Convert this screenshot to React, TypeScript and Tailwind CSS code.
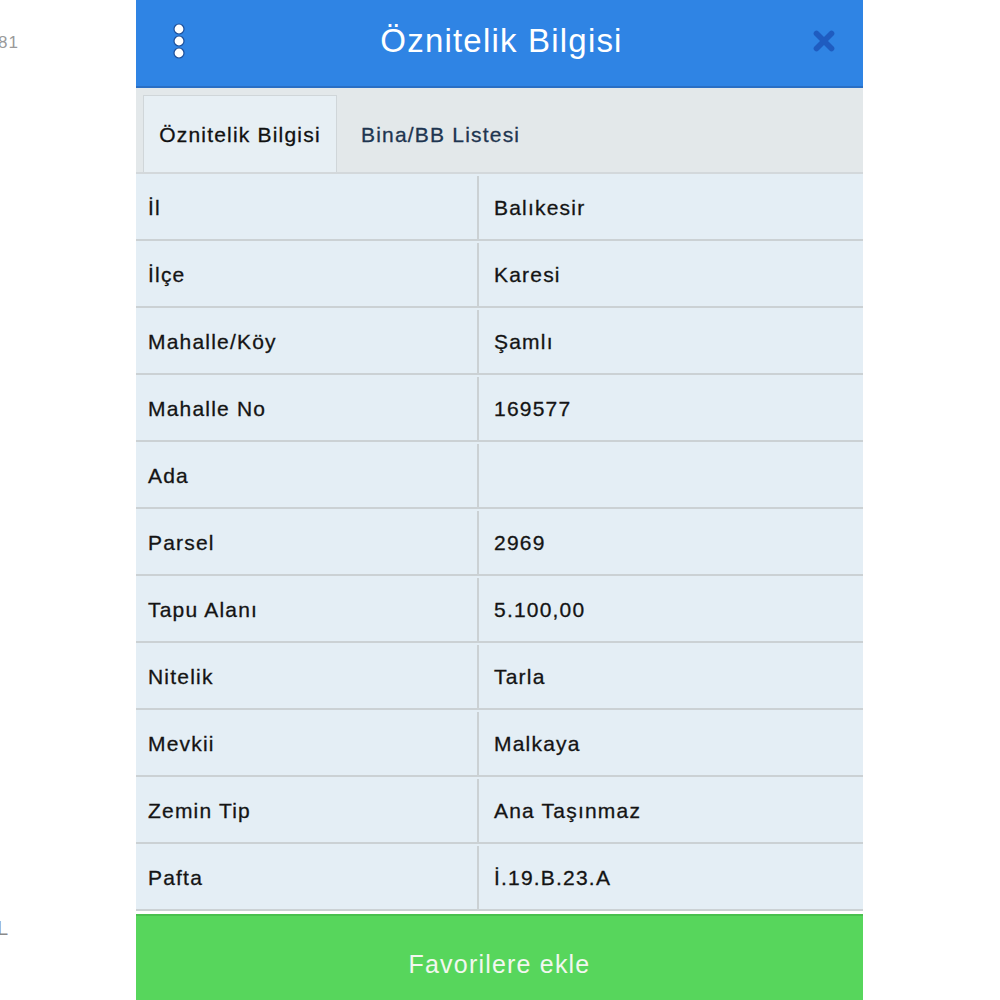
import { X } from "lucide-react";

const rows: [string, string][] = [
  ["İl", "Balıkesir"],
  ["İlçe", "Karesi"],
  ["Mahalle/Köy", "Şamlı"],
  ["Mahalle No", "169577"],
  ["Ada", ""],
  ["Parsel", "2969"],
  ["Tapu Alanı", "5.100,00"],
  ["Nitelik", "Tarla"],
  ["Mevkii", "Malkaya"],
  ["Zemin Tip", "Ana Taşınmaz"],
  ["Pafta", "İ.19.B.23.A"],
];

function KebabIcon() {
  return (
    <svg width="14" height="36" viewBox="0 0 14 36">
      {[6, 18, 30].map((cy) => (
        <circle key={cy} cx="7" cy={cy} r="5" fill="#ffffff" stroke="#1d4f9a" strokeWidth="1.2" />
      ))}
    </svg>
  );
}

export default function App() {
  return (
    <div
      className="flex h-[1000px] w-[1000px] overflow-hidden bg-white"
      style={{ fontFamily: '"Liberation Sans", Arial, sans-serif' }}
    >
      {/* background page peeking through on the left */}
      <div className="flex w-[136px] shrink-0 flex-col justify-between overflow-hidden pb-[62px] pt-[30px]">
        <span className="-ml-[2px] text-[17px] tracking-[1px] text-[#9a9a9a]">81</span>
        <span className="-ml-[3px] text-[20px] leading-none text-[#8a8a8a]">L</span>
      </div>

      <div className="flex w-[727px] shrink-0 flex-col">
        <header className="flex h-[88px] items-center justify-between border-b-2 border-[#2a6fc4] bg-[#2f84e4] pb-[5px] pl-[36px] pr-[24px]">
          <KebabIcon />
          <h1 className="pl-[8px] text-[33px] tracking-[1.2px] text-white">Öznitelik Bilgisi</h1>
          <X className="h-[30px] w-[30px] text-[#1f5cc0]" strokeWidth={4.5} />
        </header>

        <div className="flex h-[86px] items-end border-b-2 border-[#d3d8db] bg-[#e3e8ea] pl-[7px]">
          <div className="flex h-[77px] w-[194px] items-center justify-center border border-b-0 border-[#d0d6d9] bg-[#e7eff4] pt-[2px] text-[21px] tracking-[1.2px] text-[#111] [-webkit-text-stroke:0.3px_#111]">
            Öznitelik Bilgisi
          </div>
          <div className="flex h-[77px] items-center px-[24px] pt-[2px] text-[21px] tracking-[1.2px] text-[#1e3550] [-webkit-text-stroke:0.3px_#1e3550]">
            Bina/BB Listesi
          </div>
        </div>

        <div className="flex flex-col">
          {rows.map(([label, value]) => (
            <div
              key={label}
              className="flex h-[67px] border-b-2 border-[#cbd1d4] bg-[#e4eef5] pt-[2px] text-[21px] tracking-[1.2px] text-[#141414] [-webkit-text-stroke:0.3px_#141414]"
            >
              <div className="flex w-[343px] items-center border-r-2 border-[#cbd1d4] pl-[12px]">{label}</div>
              <div className="flex flex-1 items-center pl-[15px]">{value}</div>
            </div>
          ))}
        </div>

        <button className="mt-auto flex h-[86px] items-center justify-center border-t-2 border-[#4ac04f] bg-[#57d65c] pt-[14px] text-[25px] tracking-[1.2px] text-[#f2f7ef]">
          Favorilere ekle
        </button>
      </div>
    </div>
  );
}
